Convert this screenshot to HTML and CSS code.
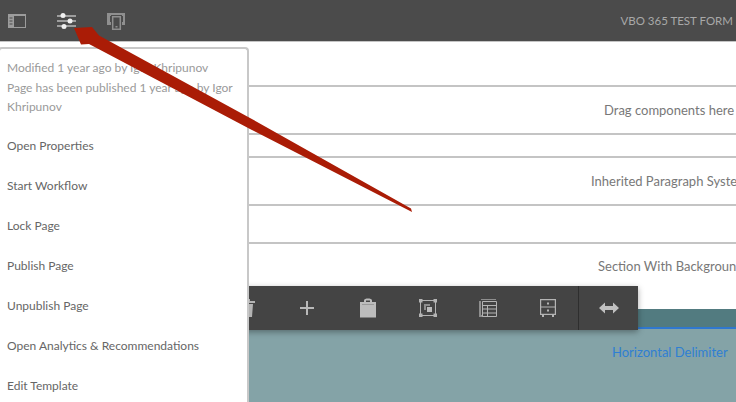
FILE: index.html
```html
<!DOCTYPE html>
<html lang="en">
<head>
    <meta charset="UTF-8">
    <title>VBO 365 Test Form</title>
    <link rel="stylesheet" href="styles.css">
</head>
<body>
    <header class="topbar">
        <div class="topbar-icons">
            <svg class="icon-panel" width="20" height="16" viewBox="0 0 20 16">
                <path fill="#9c9c9c" d="M1 1h18v14H1z"/>
                <path fill="#4b4b4b" d="M7 3h11v11H7z"/>
                <path fill="#4b4b4b" d="M2.500 4.500h3v1h-3zM2.500 7.500h3v1h-3zM2.500 10.500h3v1h-3z"/>
            </svg>
            <svg class="icon-sliders" width="20" height="16" viewBox="0 0 20 16">
                <path fill="none" stroke="#f0f0f0" d="M0 3h19M0 8h19M0 13h19"/>
                <circle fill="#f0f0f0" cx="6" cy="2.500" r="2.500"/>
                <circle fill="#f0f0f0" cx="13" cy="8" r="2.500"/>
                <circle fill="#f0f0f0" cx="7" cy="13.500" r="2.500"/>
            </svg>
            <svg class="icon-devices" width="19" height="18" viewBox="0 0 19 18">
                <path fill="#8f8f8f" d="M0 1h18v12h-3V10h1V4H3v6h1v3H0z"/>
                <path fill="#4b4b4b" d="M4 3h11v15H4z"/>
                <path fill="none" stroke="#8f8f8f" stroke-width="1.500" d="M5.700 4.700h7.600v12.600H5.700z"/>
                <path fill="#8f8f8f" d="M8.500 14h2v1.500h-2zM15.500 1.500h1v1h-1z"/>
            </svg>
        </div>
        <span class="topbar-title">VBO 365 TEST FORM</span>
    </header>

    <main class="page">
        <div class="row row-drag"><span>Drag components here</span></div>
        <div class="row row-inherited"><span>Inherited Paragraph System</span></div>
        <div class="row row-section"><span>Section With Background</span></div>
        <div class="band"></div>
        <div class="delimiter"><span>Horizontal Delimiter</span></div>
    </main>

    <aside class="popover">
        <div class="popover-meta">
            <p>Modified 1 year ago by Igor Khripunov</p>
            <p>Page has been published 1 year ago by Igor Khripunov</p>
        </div>
        <ul class="popover-menu">
            <li>Open Properties</li>
            <li>Start Workflow</li>
            <li>Lock Page</li>
            <li>Publish Page</li>
            <li>Unpublish Page</li>
            <li>Open Analytics &amp; Recommendations</li>
            <li>Edit Template</li>
        </ul>
    </aside>

    <div class="toolbar">
        <button class="tool">
            <svg width="16" height="18" viewBox="0 0 16 18"><path fill="#b4b4b4" d="M1 2h14v2H1zM6 0h4v2H6zM3 5h10l-1 13H4z"/><path fill="#5a5a5a" d="M7 7h1.500v9H7z"/></svg>
        </button>
        <button class="tool tool-plus">
            <svg width="14" height="14" viewBox="0 0 14 14"><path fill="#b9b9b9" d="M6 0h2v6h6v2H8v6H6V8H0V6h6z"/></svg>
        </button>
        <button class="tool">
            <svg width="16" height="20" viewBox="0 0 16 20"><path fill="#bcbcbc" fill-rule="evenodd" d="M0 4h4V2.500C4 1 6 .5 8 .5s4 .5 4 2V4h4v15.500H0zM6 2.500V4h4V2.500z"/><path fill="#9a9a9a" d="M2 6h12v1H2z"/></svg>
        </button>
        <button class="tool">
            <svg width="18" height="18" viewBox="0 0 18 18">
                <path fill="none" stroke="#b4b4b4" d="M1.500 1.500h15v15h-15z"/>
                <path fill="#b4b4b4" d="M0 0h3.500v3.500H0zM14.500 0H18v3.500h-3.500zM0 14.500h3.500V18H0zM14.500 14.500H18V18h-3.500z"/>
                <path fill="#8e8e8e" d="M5 5h6v2H7v4H5z"/>
                <path fill="#bcbcbc" d="M8 8h5v5H8z"/>
            </svg>
        </button>
        <button class="tool">
            <svg width="18" height="18" viewBox="0 0 18 18">
                <path fill="#8e8e8e" d="M0 2h2v14h2v2H0zM2 0h15v1H2z"/>
                <path fill="none" stroke="#b4b4b4" d="M3.500 2.500h14v15h-14zM3.500 6.500h14M3.500 10h14M3.500 14h14M8.500 6.500v11"/>
            </svg>
        </button>
        <button class="tool">
            <svg width="16" height="18" viewBox="0 0 16 18">
                <path fill="none" stroke="#b4b4b4" stroke-width="1.200" d="M.6.600h14.800v14.800H.6zM.6 8h14.800"/>
                <path fill="#b4b4b4" d="M7 3.500h2v2H7zM7 10.500h2v2H7zM2 15.500h2V18H2zM12 15.500h2V18h-2z"/>
            </svg>
        </button>
        <button class="tool tool-last">
            <svg width="20" height="12" viewBox="0 0 20 12"><path fill="#c0c0c0" d="M0 6l6-5.500V4h8V.5L20 6l-6 5.500V8H6v3.500z"/></svg>
        </button>
    </div>

    <svg class="arrow" width="736" height="402" viewBox="0 0 736 402">
        <path fill="#aa1c06" d="M74 28L92 27L99 35.500L250 118L411 208.500L412 212L250 129L89 44L81 44.500z"/>
    </svg>
</body>
</html>
```

FILE: styles.css
```css
/* Global */
* {
    margin: 0;
    padding: 0;
    box-sizing: border-box;
}

html, body {
    height: 100%;
    overflow: hidden;
}

body {
    font-family: Lato, "Open Sans", Arial, sans-serif;
    font-size: 13px;
    color: #787878;
    background: #fff;
    display: flex;
    flex-direction: column;
}

/* Top bar */
.topbar {
    flex: none;
    height: 42px;
    background: #4b4b4b;
    border-bottom: 1px solid #c4c4c4;
    display: flex;
    align-items: center;
    justify-content: space-between;
    padding: 0 3px 0 7px;
}

.topbar-icons {
    display: flex;
    align-items: center;
    gap: 30px;
}

.topbar-title {
    color: #a8a8a8;
    font-size: 11.500px;
}

/* Page behind the menu */
.page {
    flex: 1;
    padding-top: 43px;
    display: flex;
    flex-direction: column;
    overflow: hidden;
}

.row {
    flex: none;
    white-space: nowrap;
    display: flex;
    align-items: center;
    border-top: 2px solid #c4c4c4;
    border-bottom: 2px solid #c4c4c4;
}

.row-drag {
    height: 50px;
    padding-left: 604px;
    margin-bottom: 21px;
}

.row-inherited {
    height: 50px;
    padding-left: 591px;
    margin-bottom: 36px;
}

.row-section {
    height: 67px;
    padding-left: 598px;
    border-bottom: none;
    align-items: flex-start;
    padding-top: 14px;
}

.band {
    flex: none;
    height: 20px;
    background: #527b80;
    border-bottom: 2px solid #2f78cf;
}

.delimiter {
    flex: 1;
    background: #84a3a7;
    color: #2f7fd3;
    padding: 15px 0 0 612px;
    white-space: nowrap;
}

/* Page info popover */
.popover {
    position: absolute;
    top: 47px;
    left: -2px;
    width: 251px;
    height: 355px;
    background: #fff;
    border: 2px solid #c8c8c8;
    border-bottom: none;
    border-radius: 4px 4px 0 0;
    padding: 9px 7px 0;
    font-size: 12px;
    overflow: hidden;
    z-index: 2;
}

.popover-meta {
    color: #9a9a9a;
    line-height: 19.500px;
}

.popover-menu {
    list-style: none;
    margin-top: 9px;
    color: #666;
}

.popover-menu li {
    height: 40px;
    line-height: 40px;
    white-space: nowrap;
}

/* Floating component toolbar */
.toolbar {
    position: absolute;
    top: 286px;
    left: 218px;
    height: 44px;
    display: flex;
    background: #444;
    box-shadow: 0 2px 6px rgba(0, 0, 0, 0.35);
    z-index: 1;
}

.tool {
    width: 60px;
    border: none;
    background: none;
    display: flex;
    align-items: center;
    justify-content: center;
}

.tool-plus {
    padding-right: 2px;
}

.tool-last {
    border-left: 1px solid #2e2e2e;
}

.arrow {
    position: absolute;
    top: 0;
    left: 0;
    z-index: 3;
}
```
